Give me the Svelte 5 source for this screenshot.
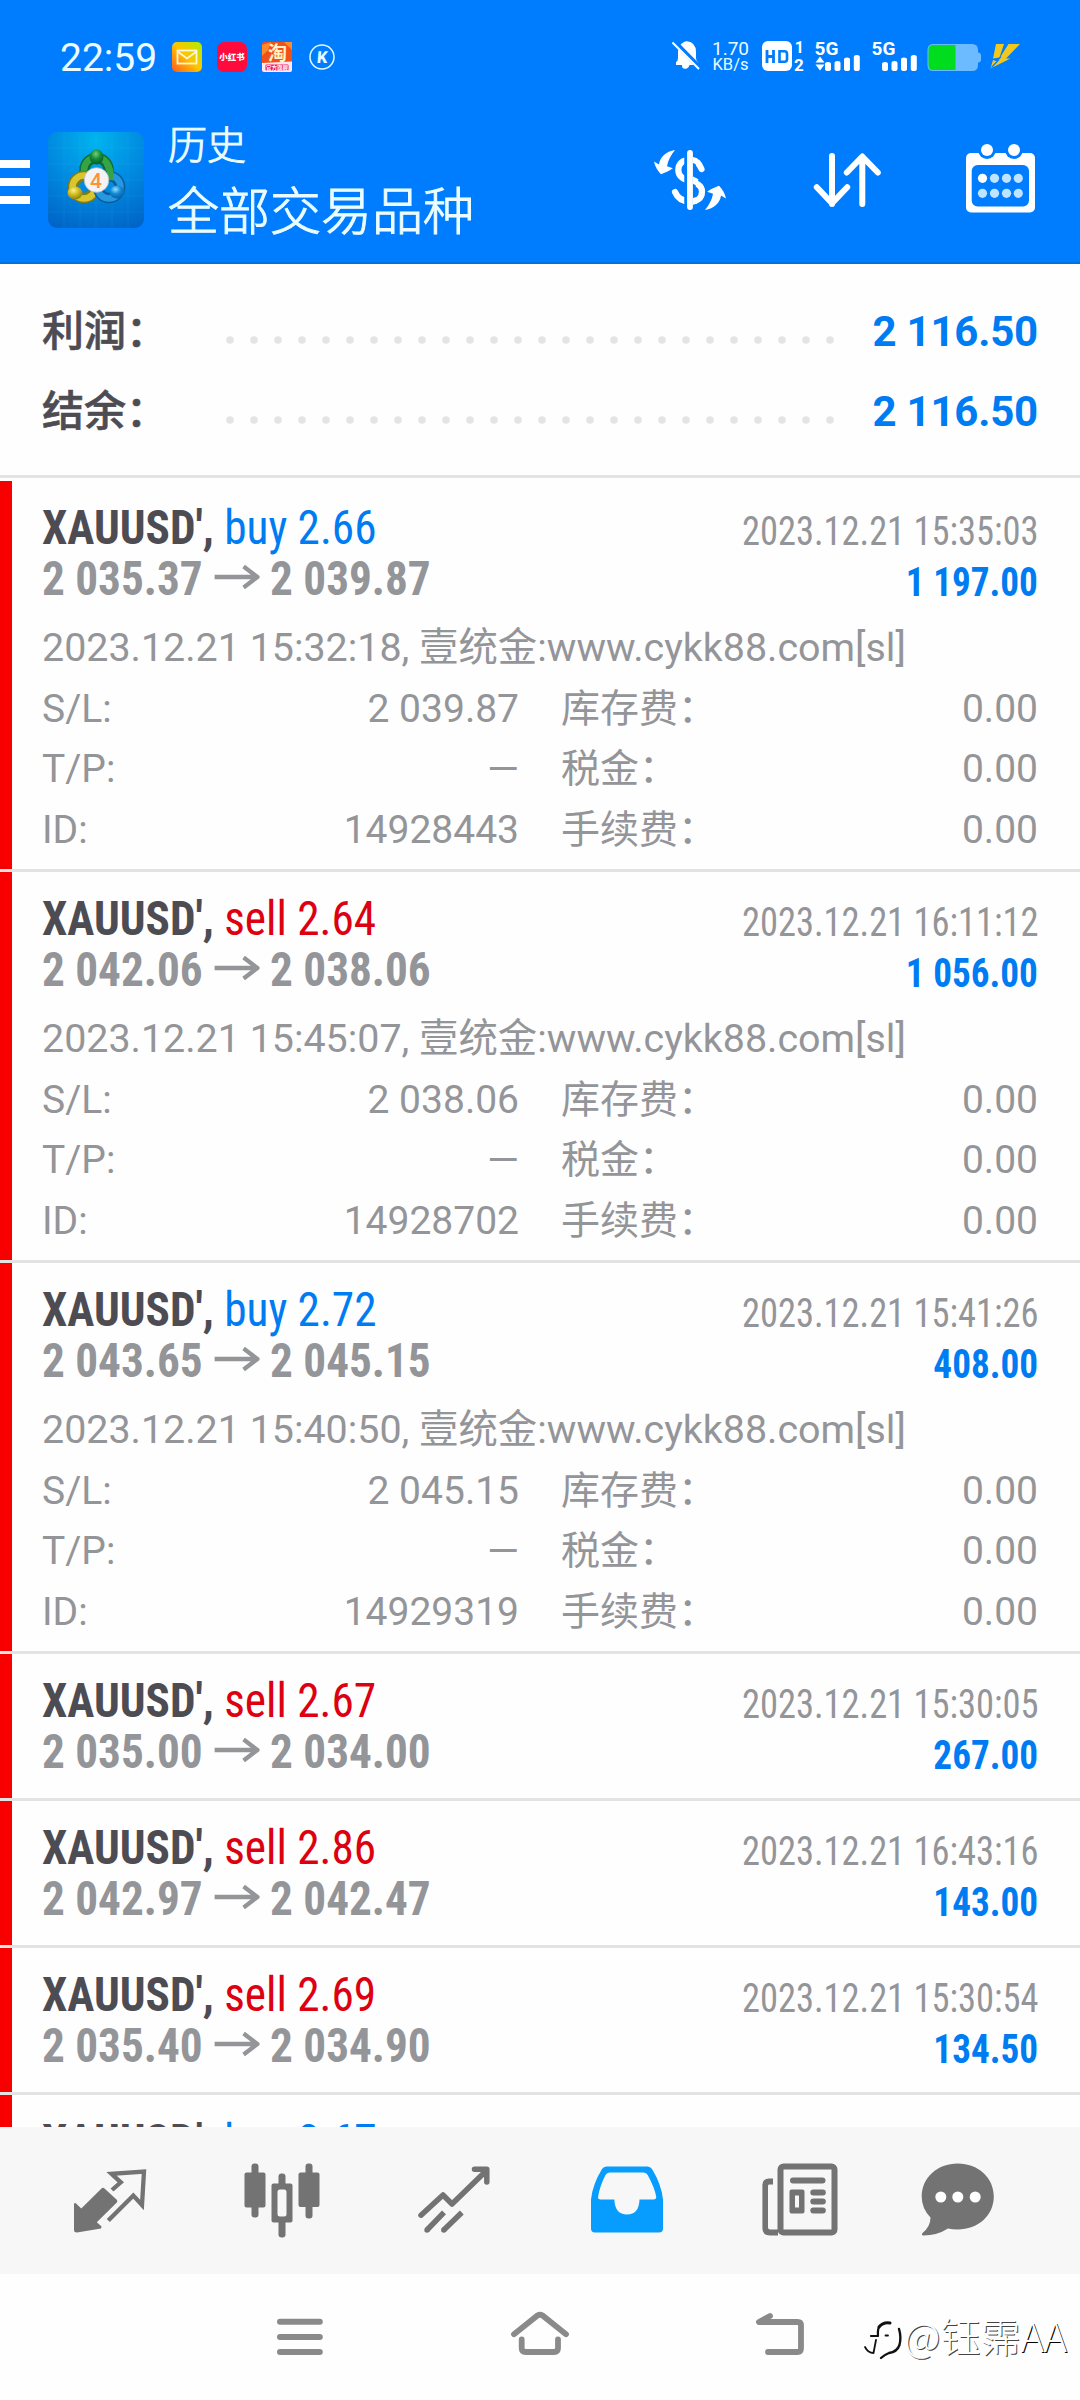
<script>
  const totals = [
    { label: '利润：', value: '2 116.50' },
    { label: '结余：', value: '2 116.50' }
  ];

  const dots = Array.from({ length: 26 }, (_, i) => 5 + i * 24);

  const deals = [
    {
      side: 'buy', volume: '2.66', open: '2 035.37', close: '2 039.87',
      closed: '2023.12.21 15:35:03', profit: '1 197.00',
      details: { opened: '2023.12.21 15:32:18', sl: '2 039.87', tp: '—', id: '14928443' }
    },
    {
      side: 'sell', volume: '2.64', open: '2 042.06', close: '2 038.06',
      closed: '2023.12.21 16:11:12', profit: '1 056.00',
      details: { opened: '2023.12.21 15:45:07', sl: '2 038.06', tp: '—', id: '14928702' }
    },
    {
      side: 'buy', volume: '2.72', open: '2 043.65', close: '2 045.15',
      closed: '2023.12.21 15:41:26', profit: '408.00',
      details: { opened: '2023.12.21 15:40:50', sl: '2 045.15', tp: '—', id: '14929319' }
    },
    { side: 'sell', volume: '2.67', open: '2 035.00', close: '2 034.00', closed: '2023.12.21 15:30:05', profit: '267.00' },
    { side: 'sell', volume: '2.86', open: '2 042.97', close: '2 042.47', closed: '2023.12.21 16:43:16', profit: '143.00' },
    { side: 'sell', volume: '2.69', open: '2 035.40', close: '2 034.90', closed: '2023.12.21 15:30:54', profit: '134.50' },
    { side: 'buy', volume: '2.67' }
  ];
</script>

<div class="screen">
  <header>
    <div class="status">
      <span class="time">22:59</span>
      <div class="apps">
        <svg width="30" height="30" viewBox="0 0 30 30">
          <defs>
            <linearGradient id="mail" x1="0" y1="1" x2="1" y2="0">
              <stop offset="0" stop-color="#ff5a1e" /><stop offset=".5" stop-color="#ffc400" /><stop offset="1" stop-color="#a8f000" />
            </linearGradient>
          </defs>
          <rect width="30" height="30" rx="5" fill="url(#mail)" />
          <rect x="5.500" y="8.500" width="19" height="13" fill="none" stroke="#fff6d8" stroke-width="1.800" />
          <path d="M5.500 9.500 15 16.500 24.500 9.500" fill="none" stroke="#fff6d8" stroke-width="1.800" />
        </svg>
        <svg width="30" height="30" viewBox="0 0 30 30">
          <rect width="30" height="30" rx="7" fill="#ff0a3c" />
          <text class="cjk" x="15" y="18.200" font-size="8.500" font-weight="900" text-anchor="middle" fill="#fff">小红书</text>
        </svg>
        <svg width="30" height="30" viewBox="0 0 30 30">
          <rect width="30" height="30" rx="2" fill="#f0501c" />
          <path d="M0 3 9 0 6 8 0 14zM22 0h8v8z" fill="#ff8a2a" />
          <path d="M0 21 30 19.500V28q0 2-2 2H2q-2 0-2-2z" fill="#ffe9f0" />
          <rect x="3.500" y="22.500" width="23" height="6" rx="1" fill="#f0145a" />
          <text class="cjk" x="15.500" y="17.500" font-size="19" font-weight="700" text-anchor="middle" fill="#fff3c8">淘</text>
          <text class="cjk" x="15" y="27.700" font-size="5.500" font-weight="700" text-anchor="middle" fill="#fff">官方旗舰</text>
        </svg>
        <svg width="30" height="30" viewBox="0 0 30 30">
          <circle cx="15" cy="15" r="12" fill="none" stroke="#e4fbff" stroke-width="1.500" />
          <text class="rob" x="15.200" y="20.800" font-size="16.500" font-weight="800" text-anchor="middle" fill="#e4fbff" transform="skewX(-5)" transform-origin="15px 15px">K</text>
        </svg>
      </div>
      <div class="system">
        <svg width="29" height="30" viewBox="672 42 29 30">
          <path d="M676 66v-3q2-1 2-4v-6q0-7 6-10l2-.8h1q9 1 9 10.800v6q0 3 2 4v3h-8.500a4.500 4.500 0 0 1-7 3l-.6-3z" fill="#fff" />
          <path d="M674 42.500 700 69" stroke="#007dff" stroke-width="5" />
          <path d="M672.500 43.500 699 70" stroke="#fff" stroke-width="2" />
        </svg>
        <div class="speed"><span>1.70</span><span class="unit">KB/s</span></div>
        <svg width="46" height="30" viewBox="760 42 46 30">
          <rect x="762" y="42" width="30" height="30" rx="6" fill="#fff" />
          <path d="M767 51v13M773.500 51v13M767 57.500h6.500" stroke="#007dff" stroke-width="2.800" fill="none" />
          <path d="M779.500 52.200h5q2.500 0 2.500 2.500v5.600q0 2.500-2.500 2.500h-5z" stroke="#007dff" stroke-width="2.600" fill="none" />
          <text class="rob" x="799.300" y="54" font-size="16" font-weight="700" text-anchor="middle" fill="#fff">1</text>
          <text class="rob" x="799" y="72" font-size="17" font-weight="700" text-anchor="middle" fill="#fff">2</text>
        </svg>
        <svg width="48" height="30" viewBox="814 42 48 30">
          <text class="rob" x="814.500" y="56" font-size="19" font-weight="700" fill="#fff">5G</text>
          <path d="M815.500 63.500 820 57.500l4.500 6zM815.500 65.500h9L820 71.500z" fill="#fff" />
          <path d="M825 65q0-2 3-2t3 2v5q0 2-3 2t-3-2zM834.500 64q0-2 3-2t3 2v6q0 2-3 2t-3-2zM844 60.500q0-2 3-2t3 2V70q0 2-3 2t-3-2zM853.800 58q0-2 3-2t3 2v12q0 2-3 2t-3-2z" fill="#fff" />
        </svg>
        <svg width="48" height="30" viewBox="870 42 48 30">
          <text class="rob" x="871.500" y="56" font-size="19" font-weight="700" fill="#fff">5G</text>
          <path d="M882 65q0-2 3-2t3 2v5q0 2-3 2t-3-2zM891.500 64q0-2 3-2t3 2v6q0 2-3 2t-3-2zM901 60.500q0-2 3-2t3 2V70q0 2-3 2t-3-2zM910.800 58q0-2 3-2t3 2v12q0 2-3 2t-3-2z" fill="#fff" />
        </svg>
        <svg width="56" height="30" viewBox="926 42 56 30">
          <path d="M933 45h39q6 0 6 6v2.500q3 .5 3 2.500v5q0 2-3 2.500V66q0 6-6 6h-39q-5.500 0-5.500-6V51q0-6 5.500-6z" fill="#6cbaff" />
          <path d="M955.500 46H933q-4.500 0-4.500 5v15q0 5 4.500 5h22.500z" fill="#00dc1e" />
        </svg>
        <svg width="30" height="30" viewBox="990 42 30 30">
          <path d="M996 45h8l-4.500 13.500-6.500 1z" fill="#f2c81e" />
          <path d="M1008.500 45h11.500l-14 14.500h4.500L990.500 69.500 993 61l4.500 1.500z" fill="#f2c81e" />
          <path d="M999 60.500 991.500 68.500M1001 57.500 997 62" stroke="#007dff" stroke-width="1.200" />
        </svg>
      </div>
    </div>

    <div class="bar">
      <svg class="burger" width="30" height="44" viewBox="0 0 30 44"><path d="M0 0h30v8H0zM0 18h30v8H0zM0 36h30v8H0z" fill="#fff" /></svg>
      <svg class="logo" width="96" height="96" viewBox="0 0 96 96">
        <defs>
          <radialGradient id="sky" cx=".5" cy=".08" r="1">
            <stop offset="0" stop-color="#00b4ee" /><stop offset=".5" stop-color="#008ae0" /><stop offset="1" stop-color="#0064c6" />
          </radialGradient>
          <radialGradient id="gr" cx=".45" cy=".3" r=".7"><stop offset="0" stop-color="#6fd07a" /><stop offset=".5" stop-color="#168a36" /><stop offset="1" stop-color="#086024" /></radialGradient>
          <radialGradient id="ye" cx=".4" cy=".3" r=".7"><stop offset="0" stop-color="#fff08a" /><stop offset=".5" stop-color="#d0ba20" /><stop offset="1" stop-color="#8c8410" /></radialGradient>
          <radialGradient id="bl" cx=".4" cy=".3" r=".7"><stop offset="0" stop-color="#8ee0ff" /><stop offset=".5" stop-color="#1488d4" /><stop offset="1" stop-color="#0860a8" /></radialGradient>
        </defs>
        <rect width="96" height="96" rx="9" fill="url(#sky)" />
        <path d="M16 0v96M32 0v96M48 0v96M64 0v96M80 0v96M0 16h96M0 32h96M0 48h96M0 64h96M0 80h96" stroke="#52c4ff" stroke-opacity=".1" />
        <circle cx="48.500" cy="38" r="12" fill="none" stroke="#0c6c34" stroke-width="10.500" />
        <circle cx="48.500" cy="38" r="12.500" fill="none" stroke="#35a447" stroke-width="6.500" />
        <circle cx="36" cy="55" r="11" fill="none" stroke="#7c7c1c" stroke-width="10.500" />
        <circle cx="36" cy="55" r="11.500" fill="none" stroke="#d8c62c" stroke-width="6.500" />
        <circle cx="61" cy="55" r="11" fill="none" stroke="#0a5c9c" stroke-width="10.500" />
        <circle cx="61" cy="55" r="11.500" fill="none" stroke="#2698e0" stroke-width="6.500" />
        <path d="M58 31q6 6 4 17" fill="none" stroke="#35a447" stroke-width="6.500" />
        <ellipse cx="48.500" cy="25" rx="7" ry="7.500" fill="url(#gr)" />
        <ellipse cx="27" cy="61" rx="7.500" ry="6.500" fill="url(#ye)" />
        <ellipse cx="69" cy="60" rx="7.500" ry="6.500" fill="url(#bl)" />
        <circle cx="48.500" cy="48" r="12.300" fill="#f3f3f5" stroke="#b9bcc0" stroke-width=".8" />
        <text class="rob" x="48" y="55.500" font-size="21" font-weight="500" text-anchor="middle" fill="#fb9238">4</text>
      </svg>
      <div class="titles">
        <span class="small">历史</span>
        <span class="big">全部交易品种</span>
      </div>
      <div class="actions">
        <svg width="80" height="80" viewBox="650 140 80 80">
          <path d="M701.500 169C699 162.500 694.500 159.800 690 159.800 682 159.800 678.300 164 678.300 170 678.300 184.500 702 178.500 702 191.500 702 198.500 697 201.500 690 201.500 682.500 201.500 677.500 198 675 192" fill="none" stroke="#fff" stroke-width="6.200" stroke-linecap="round" />
          <path d="M690 153v54" stroke="#007dff" stroke-width="11.500" />
          <path d="M693 157q3 .5 4.500 1.500l-1 6-3.500-1.500zM693 176.500l5.500 2.800-2 6.500-3.500-2zM693 198l3.500-1 2 5.800q-2.500 1.500-5.500 1.900z" fill="#fff" />
          <path d="M690 153v54" stroke="#fff" stroke-width="5.800" stroke-linecap="round" />
          <path d="M675 150C666 151.500 660 157 659 164.500L654 161.500C655 167 658 171 661 174.300 665 172.500 669 171.500 672.800 168.200L667 166.200C668 160 671 155 675 150z" fill="#fff" />
          <path d="M675 150C666 151.500 660 157 659 164.500L654 161.500C655 167 658 171 661 174.300 665 172.500 669 171.500 672.800 168.200L667 166.200C668 160 671 155 675 150z" fill="#fff" transform="rotate(180 690 180)" />
        </svg>
        <svg width="72" height="80" viewBox="810 140 72 80">
          <path d="M831 156v48M815.800 187.200 831 203.200l15.200-16M861.300 204v-47M845.800 172.500l15.500-16 15.500 16" fill="none" stroke="#fff" stroke-width="6" stroke-linecap="round" stroke-linejoin="round" />
        </svg>
        <svg width="73" height="80" viewBox="964 140 73 80">
          <rect x="966" y="153" width="69" height="59.500" rx="5" fill="#fff" />
          <rect x="971.700" y="165" width="57.300" height="41.600" rx="6" fill="#007dff" />
          <circle cx="987" cy="150" r="9" fill="#007dff" /><circle cx="1014" cy="150" r="9" fill="#007dff" />
          <circle cx="987" cy="150" r="6" fill="#fff" /><circle cx="1014" cy="150" r="6" fill="#fff" />
          {#each [178.3, 193.3] as cy, r}
            {#each [982.5, 994.5, 1006.5, 1018.3] as cx, c}
              <circle {cx} {cy} r="4.600" fill={r + c === 0 ? '#fff' : '#bfe4ff'} />
            {/each}
          {/each}
        </svg>
      </div>
    </div>
  </header>

  <main>
    <section class="totals">
      {#each totals as t}
        <div class="total">
          <span class="label">{t.label}</span>
          <svg width="610" height="10" viewBox="0 0 610 10">
            {#each dots as x}<circle cx={x} cy="5" r="3.800" fill="#e4e4e4" />{/each}
          </svg>
          <span class="sum">{t.value}</span>
        </div>
      {/each}
    </section>

    {#each deals as d}
      <article>
        <div class="head">
          <span class="name"><b>XAUUSD',</b> <span class={d.side}>{d.side} {d.volume}</span></span>
          {#if d.closed}<span class="date">{d.closed}</span>{/if}
        </div>
        {#if d.open}
          <div class="head">
            <span class="price">
              {d.open}<svg width="48" height="24" viewBox="0 0 48 24"><path d="M0 12h45M31 1.500 45.500 12 31 22.500" fill="none" stroke="#949599" stroke-width="4.500" /></svg>{d.close}
            </span>
            <span class="profit">{d.profit}</span>
          </div>
        {/if}
        {#if d.details}
          <div class="details">
            <div class="comment">{d.details.opened}, 壹统金:www.cykk88.com[sl]</div>
            <div class="grid">
              <span>S/L:</span><span class="v">{d.details.sl}</span><span class="k">库存费：</span><span class="v">0.00</span>
              <span>T/P:</span><span class="v dash">{d.details.tp}</span><span class="k">税金：</span><span class="v">0.00</span>
              <span>ID:</span><span class="v">{d.details.id}</span><span class="k">手续费：</span><span class="v">0.00</span>
            </div>
          </div>
        {/if}
      </article>
    {/each}
  </main>

  <nav class="tabs">
    <svg width="80" height="80" viewBox="70 80.500 80 80">
      <path d="M74 123 75.500 122.500 81.300 128 101.500 108Q103 106.700 104.500 108L116.800 119.300Q118 120.700 116.800 122L96.800 141.700 101.600 146 101 148 77 152Q74 152 74 149.500z" fill="#737373" />
      <path d="M112 109.500 120.800 101.800 111.500 93.300 144 91 142 124.500 133.300 115 108.300 140" fill="none" stroke="#737373" stroke-width="4.300" />
    </svg>
    <svg width="80" height="80" viewBox="241.500 80.500 80 80" fill="#737373">
      <rect x="251" y="83" width="7" height="54" rx="3" /><rect x="244" y="92" width="21" height="35" rx="2" />
      <rect x="278" y="93" width="7" height="64" rx="3" /><rect x="271" y="103" width="21" height="39" rx="2" />
      <rect x="277" y="109" width="9" height="27" rx="2.500" fill="#f7f7f7" />
      <rect x="305" y="83" width="7" height="55" rx="3" /><rect x="298" y="92" width="21" height="34.500" rx="2" />
    </svg>
    <svg width="80" height="80" viewBox="413.500 80.500 80 80" fill="none" stroke="#737373" stroke-width="5.500" stroke-linejoin="round">
      <path d="M420.500 134.700 442.500 114.500 451.500 123.500 486 90M474 88.800h12.300v12.700" stroke-linecap="round" />
      <path d="M426.500 149.500 443.500 131.800M443.300 149.500 461.300 132" />
      <circle cx="426.500" cy="149.500" r="2.700" fill="#737373" stroke="none" /><circle cx="443.300" cy="149.500" r="2.700" fill="#737373" stroke="none" />
    </svg>
    <svg width="80" height="80" viewBox="586.500 80.500 80 80">
      <path fill-rule="evenodd" fill="#069dff" d="M590.500 119Q592 104 601.500 88.500 603 86 606 86H647Q650 86 651.500 88.500 661 104 662.500 119V148Q662.500 152 658.500 152H594.500Q590.500 152 590.500 148zM597.500 117Q599 106 605 94.500 606.500 92 609 92H643Q646 92 647.200 94.500 654 107 655.700 116 656 119 653 119H639Q638.500 134 626.500 134 614.500 134 613.800 119H600Q597.500 119 597.500 117z" />
    </svg>
    <svg width="80" height="80" viewBox="760 80.500 80 80" fill="#737373">
      <rect x="780.500" y="86" width="54" height="66" rx="3" fill="none" stroke="#737373" stroke-width="6" />
      <path d="M773 98v6h-4q-1 0-1 1.500v41.500q0 2 2 2h8v6h-8q-7.600 0-7.600-7.500V104.500q0-6.500 6.600-6.500z" />
      <rect x="790" y="97" width="35.500" height="6" rx="3" />
      <path fill-rule="evenodd" d="M791.500 109h11q2 0 2 2v20q0 2-2 2h-11q-2 0-2-2v-20q0-2 2-2zM795 115v12h4v-12z" />
      <rect x="810.300" y="109" width="15.500" height="6" rx="3" /><rect x="810.300" y="118" width="15.500" height="6" rx="3" /><rect x="810.300" y="127" width="15.500" height="6" rx="3" />
    </svg>
    <svg width="80" height="80" viewBox="919 80.500 80 80">
      <path fill="#737373" d="M957.700 83C978 83 993.800 97 993.800 116S978 149 957.700 149Q952 149 948 148 937 155 923.500 155 921 155 922.500 152.500 930.500 146 930.500 137 921.700 128 921.700 116C921.700 97 937.500 83 957.700 83z" />
      <circle cx="940.800" cy="116.500" r="5.500" fill="#fff" /><circle cx="957.800" cy="116.500" r="5.500" fill="#fff" /><circle cx="975.200" cy="116.500" r="5.500" fill="#fff" />
    </svg>
  </nav>

  <footer>
    <svg width="64" height="64" viewBox="268 225 64 64"><path d="M280 241.800h39.800M280 257h39.800M280 272h39.800" stroke="#8a8a8a" stroke-width="6" stroke-linecap="round" /></svg>
    <svg width="64" height="64" viewBox="508 225 64 64"><path d="M514 254.300 537.500 235.500Q540 234 542.500 235.500L566 254.300M521.700 259.500V268Q521.700 272 525.700 272H554Q558 272 558 268V259.500" fill="none" stroke="#8a8a8a" stroke-width="5.800" stroke-linecap="round" /></svg>
    <svg width="64" height="64" viewBox="748 225 64 64"><path d="M770 236 759 242H797.500Q801 242 801 245.500V268.500Q801 272 797.500 272H768" fill="none" stroke="#8a8a8a" stroke-width="5.800" stroke-linecap="round" stroke-linejoin="round" /></svg>
    <div class="sign">
      <svg width="41" height="46" viewBox="0 0 41 46" fill="none" stroke="#111" stroke-linecap="round">
        <path d="M16 9Q20 4 27 5" stroke-width="3" />
        <path d="M36 11Q38.500 19 36.500 27 34 34 26 35 21 37 18 40" stroke-width="2.400" />
        <path d="M8 18h7M15 18q-.5-6 1-9" stroke-width="2.200" />
        <path d="M13 22 10.500 35M2 29Q5 35 10.500 35" stroke-width="1.800" />
        <path d="M22.500 17.500h2.500" stroke-width="1.800" />
      </svg>
      <span>@钰霈<span class="dark">AA</span></span>
    </div>
  </footer>
</div>

<style>
  :global(body) { background: #fefefe; }
  .screen {
    width: 1080px; height: 2400px; display: flex; flex-direction: column; overflow: hidden;
    background: #fefefe; color: #949599;
    font-family: Roboto, "Noto Sans CJK SC", sans-serif;
  }
  svg { display: block; flex: none; }
  .cjk { font-family: "Noto Sans CJK SC", sans-serif; }
  .rob { font-family: Roboto, sans-serif; }

  header { height: 264px; box-sizing: border-box; background: #007dff; border-bottom: 2px solid #0072e0; flex: none; color: #eafcff; }
  .status { height: 114px; box-sizing: border-box; display: flex; align-items: center; padding: 0 60px; }
  .time { width: 112px; font-size: 39px; line-height: 40px; padding-top: 1px; }
  .apps { display: flex; gap: 15px; }
  .system { display: flex; gap: 8px; margin-left: auto; }
  .speed { width: 43px; display: flex; flex-direction: column; align-items: center; font-size: 19px; line-height: 16px; white-space: nowrap; }
  .unit { font-size: 16.500px; }
  .bar { height: 132px; display: flex; align-items: center; padding-right: 43px; }
  .burger { margin-top: 4px; }
  .logo { margin-left: 18px; }
  .titles { margin-left: 24px; display: flex; flex-direction: column; font-family: "Noto Sans CJK SC", sans-serif; font-weight: 300; -webkit-text-stroke: 1px #eafcff; }
  .small { font-size: 39px; line-height: 56px; }
  .big { font-size: 51px; line-height: 76px; }
  .actions { display: flex; gap: 81px; margin-left: auto; }

  main { flex: 1; min-height: 0; overflow: hidden; }
  .totals { height: 214px; box-sizing: border-box; padding: 26px 42px 0; border-bottom: 3px solid #e3e3e3; margin-bottom: 3px; }
  .total { height: 80px; display: flex; align-items: center; }
  .label { width: 183px; font-size: 42px; line-height: 76px; padding-bottom: 4px; font-family: "Noto Sans CJK SC", sans-serif; font-weight: 500; color: #4e4c53; -webkit-text-stroke: .6px #4e4c53; }
  .total svg { margin-top: 19px; }
  .sum { margin-left: auto; font-size: 42px; line-height: 80px; font-weight: 700; letter-spacing: -.2px; color: #007cf2; padding-top: 4px; }

  article { border-bottom: 3px solid #e3e3e3; padding: 21px 42px 0 42px; box-shadow: inset 12px 0 #f80000; height: 123px; }
  article:has(.details) { height: 367px; }
  .head { height: 51px; display: flex; justify-content: space-between; align-items: baseline; font-family: "Roboto Condensed", Roboto, sans-serif; line-height: 51px; white-space: nowrap; }
  .name, .price { font-size: 48px; transform: scaleX(.942); transform-origin: left; }
  .name b { color: #4e4c53; font-weight: 700; }
  .buy { color: #007cf2; }
  .sell { color: #dc0010; }
  .date { font-size: 40.500px; transform: translateY(1px) scaleX(.9); transform-origin: right; }
  .price { font-weight: 700; }
  .price svg { display: inline-block; margin: 0 11.500px 0 12px; vertical-align: 6px; }
  .profit { font-size: 40.500px; font-weight: 700; color: #007cf2; transform: translateY(1px) scaleX(.918); transform-origin: right; }
  .details { padding-top: 14px; font-size: 39px; line-height: 60.700px; white-space: nowrap; }
  .comment { font-size: 39.400px; }
  .grid { display: grid; grid-template-columns: 150px 327px 200px 1fr; }
  .k { padding-left: 42px; }
  .v { text-align: right; }
  .dash { font-size: 41px; }

  .tabs { height: 147px; flex: none; background: #f7f7f7; display: grid; grid-template-columns: 172px 171px 173px 173px 174px 144px; padding-left: 24px; align-items: center; justify-items: center; }
  footer { height: 126px; flex: none; display: flex; align-items: center; gap: 176px; padding-left: 268px; position: relative; }
  .sign { position: absolute; left: 863px; top: 44px; display: flex; align-items: center; font-family: "Noto Sans CJK SC", sans-serif; font-weight: 300; font-size: 40px; line-height: 46px; color: #fff; text-shadow: 1px 1px 0 #444; white-space: nowrap; }
  .sign span { margin-top: -13px; }
  .dark { text-shadow: 1px 1px 0 #000; }
</style>
